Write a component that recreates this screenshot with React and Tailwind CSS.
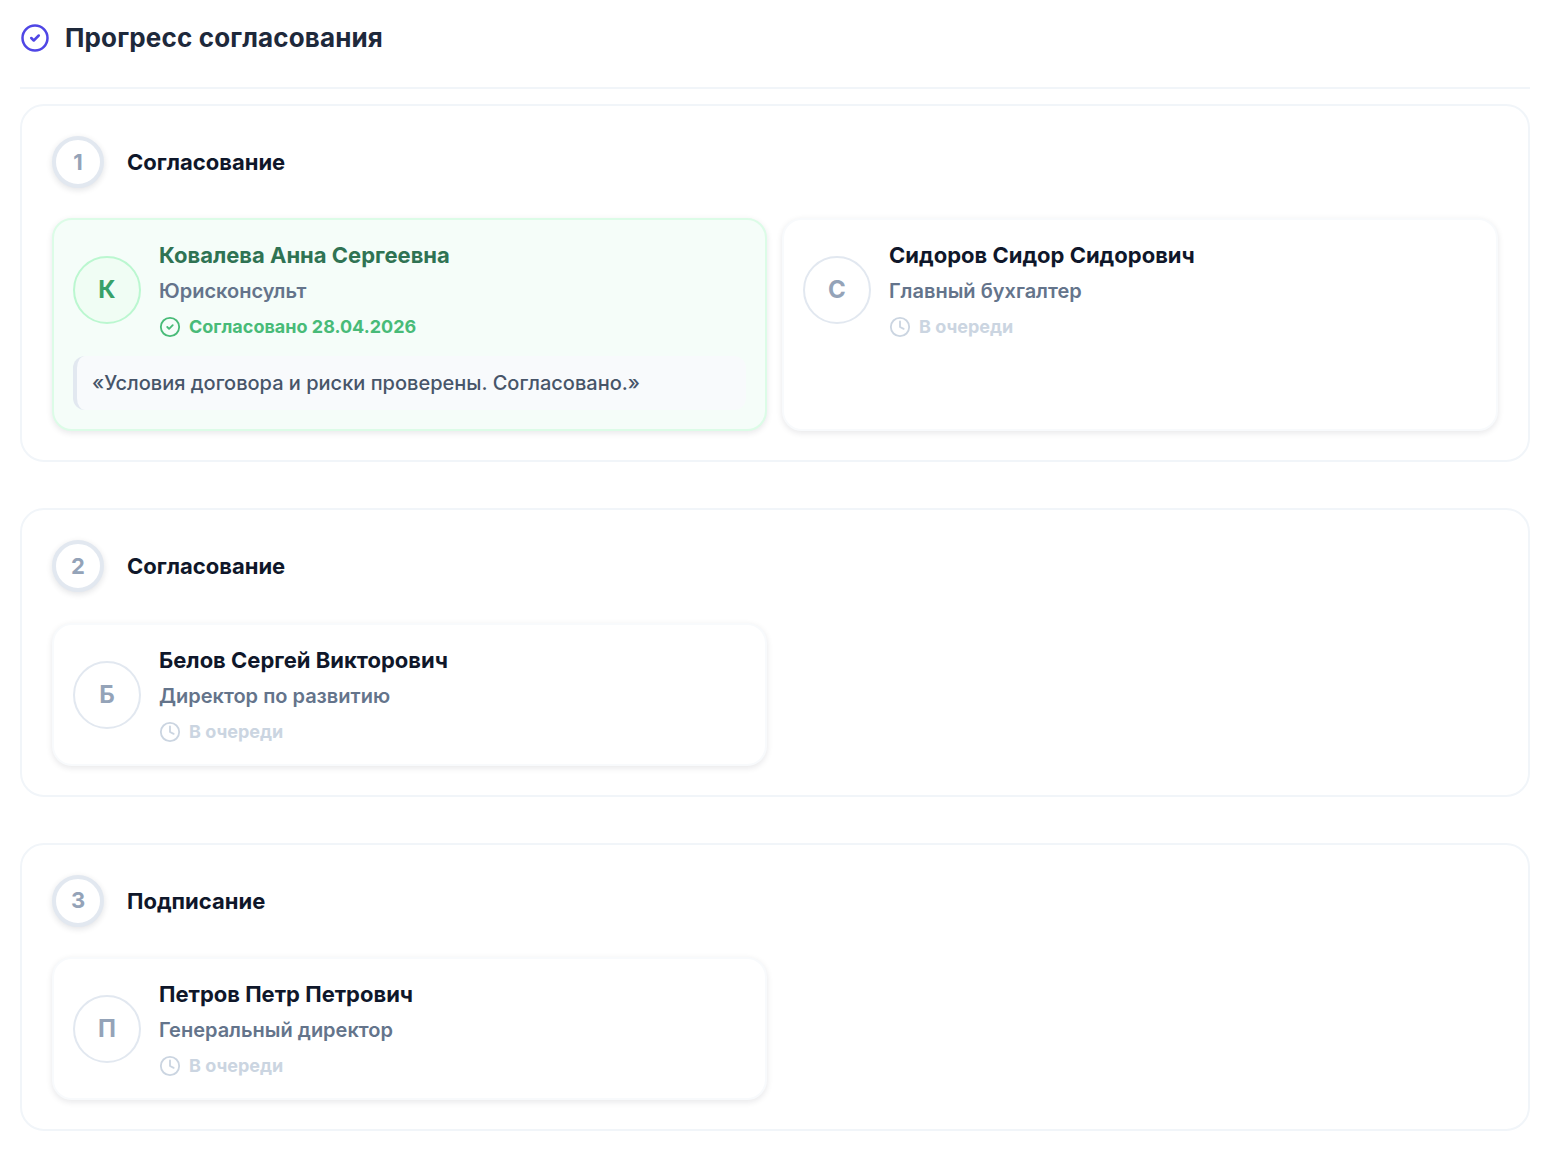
import React from "react";

const CheckCircle = ({ className }) => (
  <svg viewBox="0 0 24 24" fill="none" stroke="currentColor" strokeWidth="2" strokeLinecap="round" strokeLinejoin="round" className={className}>
    <circle cx="12" cy="12" r="10" />
    <path d="m9 12 2 2 4-4" />
  </svg>
);

const Clock = ({ className }) => (
  <svg viewBox="0 0 24 24" fill="none" stroke="currentColor" strokeWidth="2" strokeLinecap="round" strokeLinejoin="round" className={className}>
    <circle cx="12" cy="12" r="10" />
    <path d="M12 6v6l4 2" />
  </svg>
);

function Person({ letter, name, role, approved, date, quote }) {
  return (
    <div
      className={
        approved
          ? "rounded-[20px] border-2 border-[#dcfce7] bg-[#f5fdf9] px-[19px] pt-[19px] pb-[19px] shadow-[0_2px_6px_rgba(15,23,42,0.1)]"
          : "rounded-[20px] border-2 border-[#f8fafc] bg-white px-[19px] pt-[19px] pb-4 shadow-[0_2px_6px_rgba(15,23,42,0.1)]"
      }
    >
      <div className="flex items-center gap-[18px]">
        <div
          className={
            approved
              ? "mb-[2px] flex h-[68px] w-[68px] shrink-0 items-center justify-center rounded-full border-2 border-[#bbf7d0] bg-[#f0fdf4] text-[24px] font-bold text-[#38a169]"
              : "mb-[2px] flex h-[68px] w-[68px] shrink-0 items-center justify-center rounded-full border-2 border-[#e2e8f0] bg-white text-[24px] font-bold text-[#94a3b8]"
          }
        >
          {letter}
        </div>
        <div className="min-w-0">
          <div className={approved ? "text-[22px] leading-[32px] font-bold text-[#2f7353]" : "text-[22px] leading-[32px] font-bold text-[#0f172a]"}>
            {name}
          </div>
          <div className="mt-1 text-[20px] leading-[32px] font-semibold text-[#64748b]">{role}</div>
          <div className={approved ? "mt-1 flex items-center gap-2 text-[18px] leading-[32px] font-bold text-[#48bb78]" : "mt-1 flex items-center gap-2 text-[18px] leading-[32px] font-bold text-[#cbd5e1]"}>
            {approved ? <CheckCircle className="h-[22px] w-[22px]" /> : <Clock className="h-[22px] w-[22px]" />}
            <span>{approved ? `Согласовано ${date}` : "В очереди"}</span>
          </div>
        </div>
      </div>
      {quote && (
        <div className="mt-[13px] rounded-xl border-l-4 border-[#e2e8f0] bg-[#f8fafc] px-[15px] py-[11px] text-[20px] leading-[32px] font-medium text-[#475569]">
          {quote}
        </div>
      )}
    </div>
  );
}

function Stage({ n, title, children }) {
  return (
    <section className="rounded-[24px] border-2 border-[#f1f5f9] bg-white px-[30px] pt-[30px] pb-[29px]">
      <div className="mb-[30.4px] flex items-center gap-[23px]">
        <div className="flex h-[52px] w-[52px] items-center justify-center rounded-full border-4 border-[#e2e8f0] bg-white text-[22px] font-bold text-[#94a3b8] shadow-[0_2px_6px_rgba(15,23,42,0.12)]">
          {n}
        </div>
        <h3 className="text-[22px] leading-[32px] font-bold text-[#0f172a]">{title}</h3>
      </div>
      <div className="grid grid-cols-[715px_1fr] gap-[15px]">{children}</div>
    </section>
  );
}

export default function App() {
  return (
    <div className="min-h-[1156px] bg-white pt-[20px] pr-[30px] pl-[20px] [font-family:Inter,'Noto_Sans',sans-serif]">
      <div className="flex h-[36px] items-center gap-[15px]">
        <CheckCircle className="h-[30px] w-[30px] text-[#4f46e5]" />
        <h2 className="text-[26px] leading-[36px] font-bold tracking-[0.15px] text-[#1e293b]">Прогресс согласования</h2>
      </div>
      <div className="mt-[31px] mb-[15px] border-t-2 border-[#f1f5f9]" />
      <div className="flex flex-col gap-[46px]">
        <Stage n="1" title="Согласование">
          <Person letter="К" name="Ковалева Анна Сергеевна" role="Юрисконсульт" approved date="28.04.2026" quote="«Условия договора и риски проверены. Согласовано.»" />
          <Person letter="С" name="Сидоров Сидор Сидорович" role="Главный бухгалтер" />
        </Stage>
        <Stage n="2" title="Согласование">
          <Person letter="Б" name="Белов Сергей Викторович" role="Директор по развитию" />
        </Stage>
        <Stage n="3" title="Подписание">
          <Person letter="П" name="Петров Петр Петрович" role="Генеральный директор" />
        </Stage>
      </div>
    </div>
  );
}
